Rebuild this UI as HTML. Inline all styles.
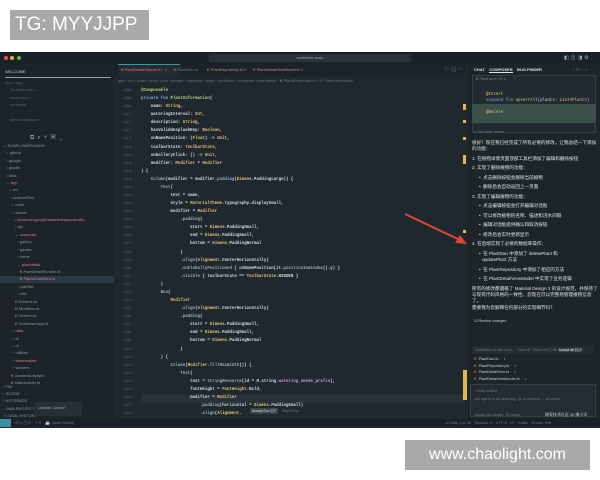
<!DOCTYPE html>
<html><head><meta charset="utf-8"><style>
*{margin:0;padding:0;box-sizing:border-box}
body{width:600px;height:480px;background:#fff;position:relative;overflow:hidden;font-family:"Liberation Sans","Noto Sans CJK SC",sans-serif}
.abs{position:absolute}
.ide{left:0;top:52px;width:600px;height:376px;background:#1f282e}
.code{font-family:"Liberation Mono",monospace;font-size:4.1px;line-height:8px;white-space:pre;color:#d6dde2;font-weight:bold}
.k{color:#7fa8d8}.t{color:#e3c57a}.f{color:#b9d48a}.p{color:#c99bd6}.s{color:#9ab0c0}
.ln{font-family:"Liberation Mono",monospace;font-size:4px;line-height:8px;color:#55636c;text-align:right;white-space:pre}
.sb{font-size:4px;line-height:7.4px;color:#8794a0;white-space:pre}
.c{position:absolute;font-family:"Liberation Sans","Noto Sans CJK SC",sans-serif;font-size:4.6px;line-height:6px;color:#dfe4e8;white-space:pre}
</style></head><body>
<div class="abs" style="left:10px;top:10px;width:139px;height:30px;background:#a9a9a9;color:#fff;font-size:19px;line-height:30px;padding-left:5px">TG: MYYJJPP</div>

<div class="abs ide"></div>
<div class="abs" style="left:0;top:52px;width:600px;height:12px;background:#1a2227"></div>
<div class="abs" style="left:4px;top:56px;width:4px;height:4px;border-radius:2px;background:#e25a4d"></div>
<div class="abs" style="left:10px;top:56px;width:4px;height:4px;border-radius:2px;background:#e0b03a"></div>
<div class="abs" style="left:17px;top:56px;width:4px;height:4px;border-radius:2px;background:#4fb84a"></div>
<div class="abs" style="left:209px;top:54px;width:202px;height:8px;background:#283238;border-radius:2px;font-size:4px;color:#9aa6ae;text-align:center;line-height:8px">sunflower-main</div>
<div class="abs" style="left:564px;top:55px;font-size:5px;color:#aab4bb;letter-spacing:2px">◧◫◨⚙</div>

<div class="abs" style="left:0;top:64px;width:114px;height:356px;background:#1c2429"></div>
<div class="abs sb" style="left:5px;top:68px;color:#c7d0d6">WELCOME</div>
<div class="abs" style="left:5px;top:77px;width:106px;height:1px;background:#8aa6b4"></div>
<div class="abs sb" style="left:5px;top:79px;color:#56626a">Open app
    Continue with...
    recent.repo
    sunflower
    ...
    open workspace</div>
<div class="abs" style="left:30px;top:132px;font-size:6px;color:#9aa6ae;letter-spacing:3px">⧉⌕⑂▣⌄</div>
<div class="abs" style="left:0;top:276px;width:114px;height:7px;background:#2a3a44"></div>
<div class="abs sb" style="left:3px;top:142px;color:#8a96a0">⌄ SUNFLOWER-MAIN
   › .github
   › google
   › gradle
   › idea
   ⌄ <span style="color:#d77c8a">app</span>
     ⌄ src
       › androidTest
       ⌄ main
         › assets
         ⌄ <span style="color:#d77c8a">java/com/google/samples/apps/sunflo...</span>
           › api
           ⌄ <span style="color:#d77c8a">compose</span>
             › gallery
             › garden
             › home
             ⌄ <span style="color:#d77c8a">plantdetail</span>
               <span style="color:#e0a04a">K</span> PlantDetailScroller.kt
               <span style="color:#e0a04a">K</span> <span style="color:#d77c8a">PlantDetailView.kt</span>
             › plantlist
             › utils
           <span style="color:#e0a04a">K</span> Dimens.kt
           <span style="color:#e0a04a">K</span> Modifiers.kt
           <span style="color:#e0a04a">K</span> Screen.kt
           <span style="color:#e0a04a">K</span> SunflowerApp.kt
         › <span style="color:#d77c8a">data</span>
         › di
         › ui
         › utilities
         › <span style="color:#d77c8a">viewmodels</span>
         › workers
       <span style="color:#e0a04a">K</span> GardenActivity.kt
       <span style="color:#e0a04a">K</span> MainActivity.kt</div>
<div class="abs sb" style="left:3px;top:383px;line-height:7.2px;color:#8a96a0">› FIM
› SCODE
› NOTEPADS
› JAVA PROJECTS
› LOCAL HISTORY</div>
<div class="abs" style="left:34px;top:402px;width:48px;height:14px;background:#263036;border-radius:2px;font-size:4px;color:#9aa6ae;padding:3px 4px">Update Cursor?</div>
<div class="abs" style="left:0;top:419px;width:600px;height:8px;background:#1a2125"></div>
<div class="abs" style="left:0;top:419px;width:11px;height:8px;background:#3a8fa0"></div>
<div class="abs" style="left:15px;top:420px;font-size:4px;color:#6d7a83;white-space:pre">⊗ 0 ⚠ 0    ⑂ 0    ☕ Java: Ready</div>
<div class="abs" style="left:445px;top:420px;font-size:4px;color:#6d7a83;white-space:pre">Ln 548, Col 46   Spaces: 4   UTF-8   LF   Kotlin   Cursor Tab</div>

<div class="abs" style="left:115px;top:64px;width:350px;height:12px;background:#1b2328"></div>
<div class="abs" style="left:118px;top:64px;width:62px;height:12px;background:#222c32;border-top:1px solid #4a90a0"></div>
<div class="abs" style="left:121px;top:67px;font-size:4px;color:#d77c8a;white-space:pre"><span style="color:#e0a04a">K</span> PlantDetailView.kt 9+  ×      <span style="color:#6d7a83"><span style="color:#e0a04a">K</span> PlantDao.kt</span>        <span style="color:#e0a04a">K</span> PlantRepository.kt 2      <span style="color:#e0a04a">K</span> PlantDetailViewModel.kt 1</div>
<div class="abs" style="left:445px;top:66px;font-size:5px;color:#8a96a0">▷ ▤ ⋯</div>
<div class="abs" style="left:118px;top:78px;font-size:4px;color:#66737c;white-space:pre">app › src › main › java › com › google › samples › apps › sunflower › compose › plantdetail › <span style="color:#e0a04a">K</span> PlantDetailView.kt › ⓟ PlantInformation</div>

<div class="abs" style="left:141px;top:395px;width:324px;height:8px;background:#283238"></div>
<div class="abs ln" style="left:115px;top:87px;width:16px;line-height:8.08px">106
108
109
110
111
112
113
114
115
116
118
119
120
121
122
123
124
125
126
127
128
129
130
131
132
133
134
135
136
137
138
139
140
141
142
143
144
145
146
147
148</div>
<div class="abs code" style="left:141px;top:87px;line-height:8.08px"><span class="f">@Composable</span>
<span class="k">private fun</span> <span class="f">PlantInformation</span>(
    name: <span class="t">String</span>,
    wateringInterval: <span class="t">Int</span>,
    description: <span class="t">String</span>,
    hasValidUnsplashKey: <span class="t">Boolean</span>,
    onNamePosition: (<span class="t">Float</span>) -> <span class="t">Unit</span>,
    toolbarState: <span class="t">ToolbarState</span>,
    onGalleryClick: () -> <span class="t">Unit</span>,
    modifier: <span class="t">Modifier</span> = <span class="t">Modifier</span>
) {
    <span class="s">Column</span>(modifier = modifier.<span class="s">padding</span>(<span class="t">Dimens</span>.PaddingLarge)) {
        <span class="s">Text</span>(
            text = name,
            style = <span class="t">MaterialTheme</span>.typography.displaySmall,
            modifier = <span class="t">Modifier</span>
                .<span class="s">padding</span>(
                    start = <span class="t">Dimens</span>.PaddingSmall,
                    end = <span class="t">Dimens</span>.PaddingSmall,
                    bottom = <span class="t">Dimens</span>.PaddingNormal
                )
                .<span class="s">align</span>(<span class="t">Alignment</span>.CenterHorizontally)
                .<span class="s">onGloballyPositioned</span> { onNamePosition(it.<span class="s">positionInWindow</span>().y) }
                .<span class="s">visible</span> { toolbarState == <span class="t">ToolbarState</span>.HIDDEN }
        )
        <span class="s">Box</span>(
            <span class="t">Modifier</span>
                .<span class="s">align</span>(<span class="t">Alignment</span>.CenterHorizontally)
                .<span class="s">padding</span>(
                    start = <span class="t">Dimens</span>.PaddingSmall,
                    end = <span class="t">Dimens</span>.PaddingSmall,
                    bottom = <span class="t">Dimens</span>.PaddingNormal
                )
        ) {
            <span class="s">Column</span>(<span class="t">Modifier</span>.<span class="s">fillMaxWidth</span>()) {
                <span class="s">Text</span>(
                    text = <span class="s">stringResource</span>(id = R.string.<span class="p">watering_needs_prefix</span>),
                    fontWeight = <span class="t">FontWeight</span>.Bold,
                    modifier = <span class="t">Modifier</span>
                        .<span class="s">padding</span>(horizontal = <span class="t">Dimens</span>.PaddingSmall)
                        .<span class="s">align</span>(<span class="t">Alignment</span>.</div>
<div class="abs" style="left:250px;top:408px;width:28px;height:6px;background:#3a444a;font-size:3.5px;color:#dfe4e8;text-align:center;line-height:6px">Accept Esc ⌘Y</div>
<div class="abs" style="left:282px;top:408px;font-size:3.5px;color:#6d7a83;line-height:6px">Reject Esc</div>

<div class="abs" style="left:463px;top:104px;width:3px;height:6px;background:#e0b84a"></div>
<div class="abs" style="left:463px;top:120px;width:3px;height:3px;background:#e0b84a"></div>
<div class="abs" style="left:463px;top:137px;width:3px;height:3px;background:#e0b84a"></div>
<div class="abs" style="left:463px;top:155px;width:3px;height:9px;background:#e0b84a"></div>
<div class="abs" style="left:463px;top:230px;width:3px;height:3px;background:#e0b84a"></div>
<div class="abs" style="left:463px;top:370px;width:4px;height:30px;background:#e0b84a"></div>

<div class="abs" style="left:468px;top:64px;width:132px;height:355px;background:#1d2529"></div>
<div class="abs" style="left:474px;top:67px;font-size:4px;color:#dfe4e8;font-weight:bold;white-space:pre">CHAT    <span style="border-bottom:1px solid #dfe4e8">COMPOSER</span>    BUG FINDER</div>
<div class="abs" style="left:572px;top:67px;font-size:4px;color:#6d7a83">+ ⟲ ⋯ ×</div>
<div class="abs" style="left:472px;top:75px;width:124px;height:58px;background:#222b30;border:1px solid #343e44"></div>
<div class="abs" style="left:476px;top:77px;font-size:3.5px;color:#6d7a83"><span style="color:#e0a04a">K</span> PlantDao.kt +8 ●</div>
<div class="abs" style="left:472px;top:104px;width:124px;height:19px;background:#3a5048"></div>
<div class="abs code" style="left:486px;top:92px;line-height:6px;font-weight:normal"><span class="t">@Insert</span>
<span class="k">suspend fun</span> <span class="f">upsertAll</span>(plants: <span class="t">List</span>&lt;<span class="t">Plant</span>&gt;)

<span class="t">@Delete</span></div>
<div class="abs" style="left:474px;top:129px;font-size:4px;color:#6d7a83">✓ No linter errors</div>

<div class="c" style="left:472px;top:140px">很好！现在我已经完成了所有必要的修改。让我总结一下添加</div>
<div class="c" style="left:472px;top:146px">的功能：</div>
<div class="c" style="left:472px;top:156px">1. 在植物详情页面顶部工具栏添加了编辑和删除按钮</div>
<div class="c" style="left:472px;top:165px">2. 实现了删除植物的功能：</div>
<div class="c" style="left:479px;top:175px">•  点击删除按钮会删除当前植物</div>
<div class="c" style="left:479px;top:184px">•  删除后会自动返回上一页面</div>
<div class="c" style="left:472px;top:194px">3. 实现了编辑植物的功能：</div>
<div class="c" style="left:479px;top:203px">•  点击编辑按钮会打开编辑对话框</div>
<div class="c" style="left:479px;top:213px">•  可以修改植物的名称、描述和浇水间隔</div>
<div class="c" style="left:479px;top:222px">•  编辑对话框提供确认和取消按钮</div>
<div class="c" style="left:479px;top:232px">•  修改后会实时更新显示</div>
<div class="c" style="left:472px;top:241px">4. 在后端实现了必要的数据库操作：</div>
<div class="c" style="left:479px;top:251px">•  在 PlantDao 中添加了 deletePlant 和</div>
<div class="c" style="left:482px;top:257px">updatePlant 方法</div>
<div class="c" style="left:479px;top:267px">•  在 PlantRepository 中添加了相应的方法</div>
<div class="c" style="left:479px;top:276px">•  在 PlantDetailViewModel 中实现了业务逻辑</div>
<div class="c" style="left:472px;top:286px">所有的修改都遵循了 Material Design 3 的设计规范，并保持了</div>
<div class="c" style="left:472px;top:292px">与现有代码风格的一致性。您现在可以完整地管理植物信息</div>
<div class="c" style="left:472px;top:298px">了。</div>
<div class="c" style="left:472px;top:305px">需要我为您解释任何部分的实现细节吗？</div>

<div class="abs" style="left:474px;top:318px;font-size:3.8px;color:#c7d0d6">☑ Review changes</div>
<div class="abs" style="left:472px;top:346px;width:122px;height:8px;background:#242d32;font-size:3.5px;color:#6d7a83;line-height:8px;padding-left:3px;white-space:pre">Completed (4 files chan...   Save all   Reject all ⌘⌫  <span style="background:#39444a;color:#dfe4e8">Accept all ⌘⏎</span></div>
<div class="abs" style="left:474px;top:356px;font-size:3.8px;color:#c7d0d6;line-height:6.5px;white-space:pre"><span style="color:#e0a04a">K</span>  PlantDao.kt  ·  •
<span style="color:#e0a04a">K</span>  PlantRepository.kt  ·  •
<span style="color:#e0a04a">K</span>  PlantDetailView.kt  ·  •
<span style="color:#e0a04a">K</span>  PlantDetailViewModel.kt  ·  •</div>
<div class="abs" style="left:470px;top:384px;width:126px;height:33px;background:#232c31;border:1px solid #343e44"></div>
<div class="abs" style="left:474px;top:387px;font-size:3.8px;color:#6d7a83;line-height:8px;white-space:pre">+ Add context
Ask agent to do anything, @ to mention, ↑ to select

claude-35-sonnet  ⊕ image</div>
<div class="abs" style="left:545px;top:412px;font-size:4px;color:#c7d0d6">稀家技术社区 @ 稀少洋</div>

<svg class="abs" style="left:0;top:0" width="600" height="480"><line x1="405" y1="214" x2="462" y2="241" stroke="#e2452f" stroke-width="2"/><polygon points="467,244 455,243 460,235" fill="#e2452f"/></svg>

<div class="abs" style="left:405px;top:440px;width:185px;height:30px;background:#a9a9a9;color:#fff;font-size:16px;line-height:30px;text-align:center">www.chaolight.com</div>
</body></html>
